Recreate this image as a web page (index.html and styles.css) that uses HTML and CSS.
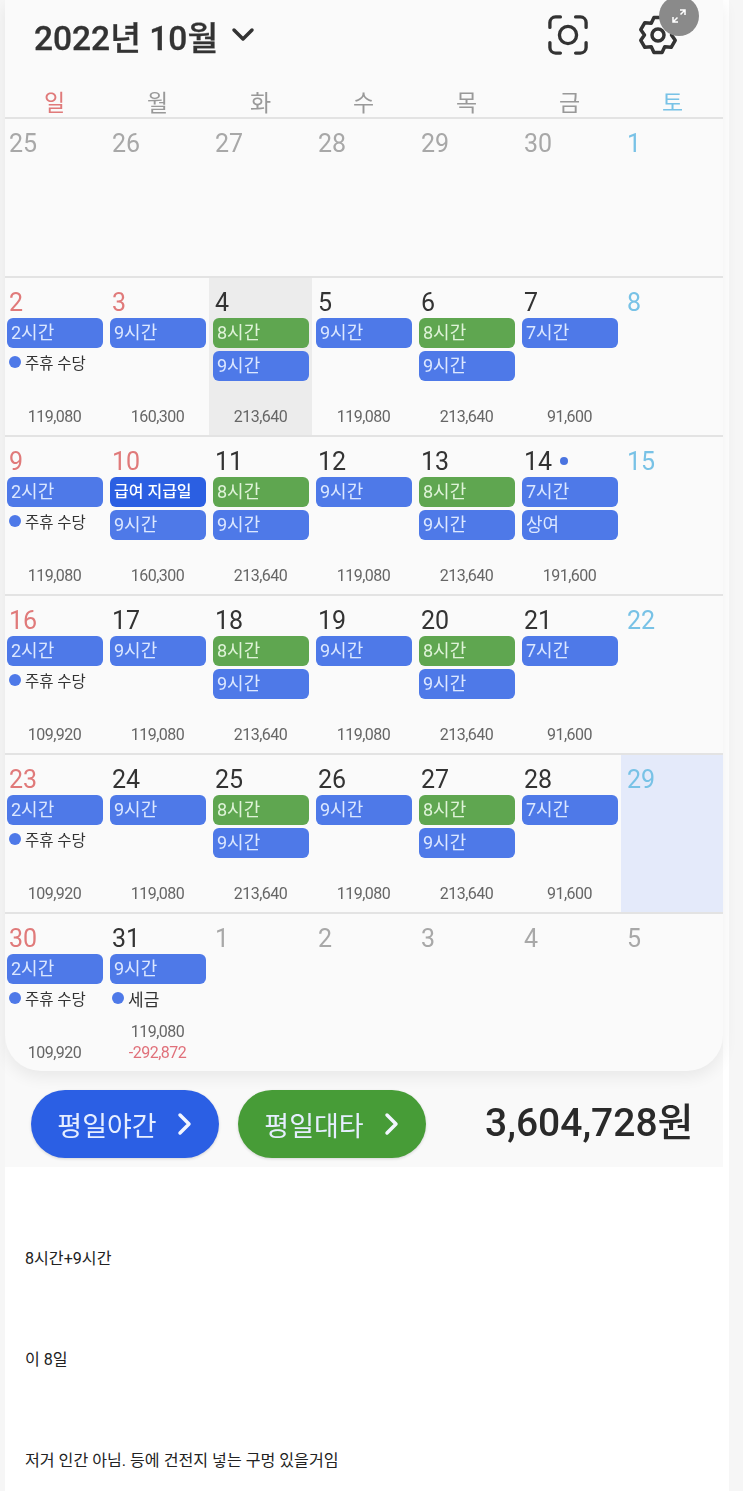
FILE: index.html
```html
<!DOCTYPE html>
<html lang="ko">
  <head>
    <meta charset="UTF-8" />
    <title>2022년 10월</title>
    <link rel="stylesheet" href="styles.css">
  </head>
  <body>
    <div class="post">
      <div class="shot">
        <!-- CALENDAR CARD -->
        <div class="card">
          <header class="top">
            <div class="month">2022년 10월
              <svg class="caret" width="24" height="16" viewBox="0 0 24 16"><path d="M3 3l9 9 9-9" /></svg>
            </div>
            <svg class="icon scan" width="40" height="40" viewBox="0 0 42 42">
              <path d="M2 13V8a6 6 0 0 1 6-6h5M29 2h5a6 6 0 0 1 6 6v5M40 29v5a6 6 0 0 1-6 6h-5M13 40H8a6 6 0 0 1-6-6v-5" />
              <circle cx="21" cy="21" r="9" />
            </svg>
            <svg class="icon gear" width="40" height="40" viewBox="0 0 40 40">
              <polygon points="13.25,8.31 15.95,2.46 24.05,2.46 26.75,8.31 33.16,7.72 37.21,14.74 33.5,20 37.21,25.26 33.16,32.27 26.75,31.69 24.05,37.54 15.95,37.54 13.25,31.69 6.84,32.28 2.79,25.26 6.5,20 2.79,14.74 6.84,7.73" />
              <circle cx="20" cy="20" r="6" />
            </svg>
          </header>

          <div class="weekdays">
            <span class="sun">일</span><span>월</span><span>화</span><span>수</span><span>목</span><span>금</span><span class="sat">토</span>
          </div>

          <div class="week">
            <div class="cell"><div class="day off">25</div></div>
            <div class="cell"><div class="day off">26</div></div>
            <div class="cell"><div class="day off">27</div></div>
            <div class="cell"><div class="day off">28</div></div>
            <div class="cell"><div class="day off">29</div></div>
            <div class="cell"><div class="day off">30</div></div>
            <div class="cell"><div class="day sat">1</div></div>
          </div>

          <div class="week">
            <div class="cell"><div class="day sun">2</div><div class="chip">2시간</div><div class="note"><i></i>주휴 수당</div><div class="pay">119,080</div></div>
            <div class="cell"><div class="day sun">3</div><div class="chip">9시간</div><div class="pay">160,300</div></div>
            <div class="cell today"><div class="day">4</div><div class="chip green">8시간</div><div class="chip">9시간</div><div class="pay">213,640</div></div>
            <div class="cell"><div class="day">5</div><div class="chip">9시간</div><div class="pay">119,080</div></div>
            <div class="cell"><div class="day">6</div><div class="chip green">8시간</div><div class="chip">9시간</div><div class="pay">213,640</div></div>
            <div class="cell"><div class="day">7</div><div class="chip">7시간</div><div class="pay">91,600</div></div>
            <div class="cell"><div class="day sat">8</div></div>
          </div>

          <div class="week">
            <div class="cell"><div class="day sun">9</div><div class="chip">2시간</div><div class="note"><i></i>주휴 수당</div><div class="pay">119,080</div></div>
            <div class="cell"><div class="day sun">10</div><div class="chip strong">급여 지급일</div><div class="chip">9시간</div><div class="pay">160,300</div></div>
            <div class="cell"><div class="day">11</div><div class="chip green">8시간</div><div class="chip">9시간</div><div class="pay">213,640</div></div>
            <div class="cell"><div class="day">12</div><div class="chip">9시간</div><div class="pay">119,080</div></div>
            <div class="cell"><div class="day">13</div><div class="chip green">8시간</div><div class="chip">9시간</div><div class="pay">213,640</div></div>
            <div class="cell"><div class="day">14<b class="mark"></b></div><div class="chip">7시간</div><div class="chip">상여</div><div class="pay">191,600</div></div>
            <div class="cell"><div class="day sat">15</div></div>
          </div>

          <div class="week">
            <div class="cell"><div class="day sun">16</div><div class="chip">2시간</div><div class="note"><i></i>주휴 수당</div><div class="pay">109,920</div></div>
            <div class="cell"><div class="day">17</div><div class="chip">9시간</div><div class="pay">119,080</div></div>
            <div class="cell"><div class="day">18</div><div class="chip green">8시간</div><div class="chip">9시간</div><div class="pay">213,640</div></div>
            <div class="cell"><div class="day">19</div><div class="chip">9시간</div><div class="pay">119,080</div></div>
            <div class="cell"><div class="day">20</div><div class="chip green">8시간</div><div class="chip">9시간</div><div class="pay">213,640</div></div>
            <div class="cell"><div class="day">21</div><div class="chip">7시간</div><div class="pay">91,600</div></div>
            <div class="cell"><div class="day sat">22</div></div>
          </div>

          <div class="week">
            <div class="cell"><div class="day sun">23</div><div class="chip">2시간</div><div class="note"><i></i>주휴 수당</div><div class="pay">109,920</div></div>
            <div class="cell"><div class="day">24</div><div class="chip">9시간</div><div class="pay">119,080</div></div>
            <div class="cell"><div class="day">25</div><div class="chip green">8시간</div><div class="chip">9시간</div><div class="pay">213,640</div></div>
            <div class="cell"><div class="day">26</div><div class="chip">9시간</div><div class="pay">119,080</div></div>
            <div class="cell"><div class="day">27</div><div class="chip green">8시간</div><div class="chip">9시간</div><div class="pay">213,640</div></div>
            <div class="cell"><div class="day">28</div><div class="chip">7시간</div><div class="pay">91,600</div></div>
            <div class="cell picked"><div class="day sat">29</div></div>
          </div>

          <div class="week">
            <div class="cell"><div class="day sun">30</div><div class="chip">2시간</div><div class="note"><i></i>주휴 수당</div><div class="pay">109,920</div></div>
            <div class="cell"><div class="day">31</div><div class="chip">9시간</div><div class="note big"><i></i>세금</div><div class="pay">119,080<br><span class="minus">-292,872</span></div></div>
            <div class="cell"><div class="day off">1</div></div>
            <div class="cell"><div class="day off">2</div></div>
            <div class="cell"><div class="day off">3</div></div>
            <div class="cell"><div class="day off">4</div></div>
            <div class="cell"><div class="day off">5</div></div>
          </div>
        </div>

        <!-- BOTTOM BAR -->
        <div class="bar">
          <a class="btn blue">평일야간<svg width="16" height="24" viewBox="0 0 16 24"><path d="M3 3l9 9-9 9" /></svg></a>
          <a class="btn dark-green">평일대타<svg width="16" height="24" viewBox="0 0 16 24"><path d="M3 3l9 9-9 9" /></svg></a>
          <div class="total">3,604,728원</div>
        </div>
      </div>

      <!-- POST TEXT -->
      <div class="text">
        <p>8시간+9시간</p>
        <p>이 8일</p>
        <p>저거 인간 아님. 등에 건전지 넣는 구멍 있을거임</p>
      </div>
    </div>

    <!-- image expand button -->
    <div class="expand">
      <svg width="18" height="18" viewBox="0 0 18 18"><path d="M10 3h5v5M15 3l-4.500 4.500M8 15H3v-5M3 15l4.500-4.500" /></svg>
    </div>
  </body>
</html>
```

FILE: styles.css
```css
/* Global */
* {
  box-sizing: border-box;
}
html,
body {
  height: 1491px;
  overflow: hidden;
}
body {
  margin: 0;
  background: #f6f6f6;
  font-family: Roboto, "Noto Sans CJK KR", sans-serif;
  color: #2b2b2b;
}
.post {
  width: 724px;
  height: 1491px;
  margin-left: 5px;
  background: #fff;
}
/* the calendar is a soft, rescaled phone capture */
.shot {
  width: 718px;
  height: 1167px;
  background: linear-gradient(#f3f3f3, #f9f9f9 40px);
  background-size: 100% 100%;
  filter: blur(0.4px);
}

/* CALENDAR CARD */
.card {
  height: 1071px;
  overflow: hidden;
  background: #fafafa;
  border-radius: 0 0 36px 36px;
  box-shadow: 0 6px 16px rgba(0, 0, 0, 0.07);
}
.top {
  display: flex;
  align-items: center;
  height: 70px;
  padding-left: 29px;
}
.month {
  display: flex;
  align-items: center;
  gap: 13px;
  width: 514px;
  font-size: 33.500px;
  font-weight: 500;
  -webkit-text-stroke: 0.3px #333;
  color: #333;
  white-space: nowrap;
}
.caret path {
  fill: none;
  stroke: #333;
  stroke-width: 3.500;
  stroke-linecap: round;
  stroke-linejoin: round;
}
.icon {
  flex: none;
}
.icon path,
.icon circle,
.icon polygon {
  fill: none;
  stroke: #333;
  stroke-width: 3.500;
  stroke-linecap: round;
  stroke-linejoin: round;
}
.scan {
  margin-right: 50px;
}

.weekdays {
  display: grid;
  grid-template-columns: repeat(7, 103px);
  height: 47px;
  margin-left: -2px;
  padding-top: 19px;
  font-size: 23px;
  line-height: 30px;
  text-align: center;
  color: #999;
}
.week {
  display: grid;
  grid-template-columns: repeat(7, 103px);
  height: 159px;
  margin-left: -2px;
  border-top: 2px solid #e3e3e3;
}
.cell {
  display: flex;
  flex-direction: column;
  padding-top: 9px;
}
.today {
  background: #ececec;
}
.picked {
  background: #e4eafa;
}
.day {
  display: flex;
  align-items: center;
  height: 30px;
  padding-left: 6px;
  font-size: 25px;
  color: #333;
}
.off {
  color: #a8a8a8;
}
.sun {
  color: #e07a7a;
}
.sat {
  color: #78c2e6;
}
.mark {
  width: 8px;
  height: 8px;
  margin-left: 8px;
  border-radius: 50%;
  background: #4a74e0;
}
.chip {
  height: 30px;
  margin: 1px 3px 2px 4px;
  padding-left: 4px;
  border-radius: 6px;
  background: #4e79e8;
  color: #dbe7ff;
  font-size: 18px;
  line-height: 29px;
  white-space: nowrap;
}
.chip.green {
  background: #5fa650;
  color: #dff3d8;
}
.chip.strong {
  background: #2b5fe2;
  color: #fff;
  font-size: 16px;
  font-weight: 500;
}
.note {
  display: flex;
  align-items: center;
  gap: 4px;
  height: 22px;
  margin: 1px 0 0 6px;
  font-size: 15.500px;
  color: #333;
  white-space: nowrap;
}
.note i {
  width: 12px;
  height: 12px;
  border-radius: 50%;
  background: #4e79e8;
}
.note.big {
  font-size: 17px;
}
.pay {
  margin-top: auto;
  padding-bottom: 8px;
  font-size: 16px;
  line-height: 21px;
  letter-spacing: -0.5px;
  text-align: center;
  color: #666;
}
.minus {
  color: #e0707a;
}

/* BOTTOM BAR */
.bar {
  display: flex;
  align-items: center;
  height: 96px;
  padding: 10px 0 0 26px;
}
.btn {
  display: flex;
  align-items: center;
  justify-content: center;
  gap: 20px;
  width: 188px;
  height: 68px;
  margin-right: 19px;
  border-radius: 34px;
  box-shadow: 0 1px 3px rgba(0, 0, 0, 0.15);
  color: #e6eeff;
  font-size: 27px;
}
.btn path {
  fill: none;
  stroke: #f2f6ff;
  stroke-width: 3.500;
  stroke-linecap: round;
  stroke-linejoin: round;
}
.blue {
  background: #2b5fe4;
}
.dark-green {
  background: #479c37;
}
.total {
  margin: 0 0 10px 40px;
  font-size: 39px;
  font-weight: 500;
  color: #2a2a2a;
  white-space: nowrap;
}

/* POST TEXT */
.text {
  padding: 80px 0 0 20px;
  font-size: 16.100px;
  line-height: 24px;
  color: #222;
}
.text p {
  margin: 0 0 77px;
}

/* expand button over the picture */
.expand {
  position: absolute;
  top: -4px;
  left: 659px;
  display: flex;
  align-items: center;
  justify-content: center;
  width: 40px;
  height: 40px;
  border-radius: 50%;
  background: #8a8a8a;
}
.expand path {
  fill: none;
  stroke: #fff;
  stroke-width: 1.500;
}
```
